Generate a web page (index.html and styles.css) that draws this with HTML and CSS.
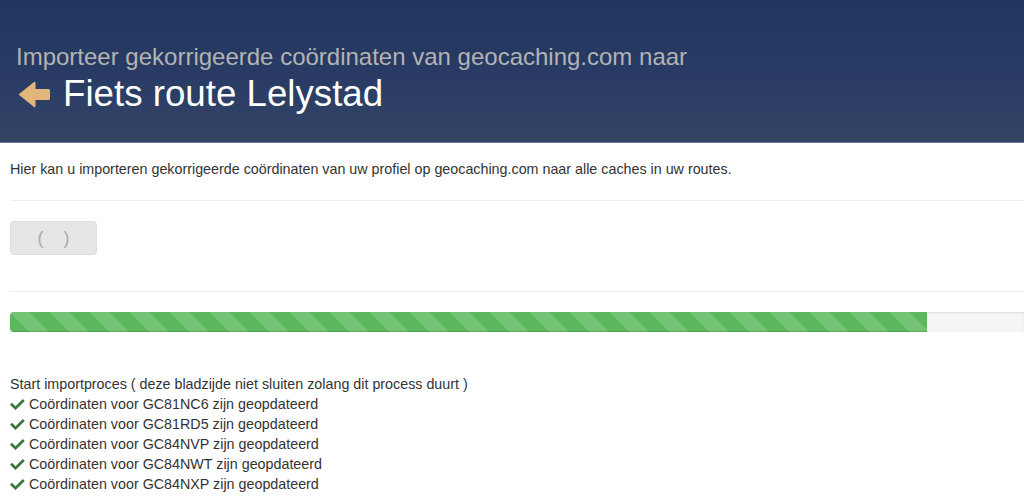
FILE: index.html
```html
<!DOCTYPE html>
<html lang="nl">
<head>
  <meta charset="UTF-8">
  <title>Importeer gekorrigeerde coördinaten</title>
  <link rel="stylesheet" href="styles.css">
</head>
<body>
  <div class="banner">
    <h2 class="banner-sub">Importeer gekorrigeerde coördinaten van geocaching.com naar</h2>
    <h1 class="banner-title">
      <svg class="back-icon" viewBox="0 0 32 27" width="32" height="27">
        <path d="M0.5 13.5 L16 1 Q17.5 0 17.5 2 L17.5 8 L30.5 8 Q32 8 32 9.5 L32 17.5 Q32 19 30.5 19 L17.5 19 L17.5 25 Q17.5 27 16 26 Z" fill="#e2b57a"/>
      </svg>
      Fiets route Lelystad
    </h1>
  </div>

  <div class="content">
    <p class="intro">Hier kan u importeren gekorrigeerde coördinaten van uw profiel op geocaching.com naar alle caches in uw routes.</p>
    <hr>
    <button class="btn" type="button">(&nbsp;&nbsp;&nbsp;&nbsp;)</button>
    <hr>
    <div class="progress">
      <div class="progress-bar" style="width: 90.4%"></div>
    </div>

    <div class="log">
      <div>Start importproces ( deze bladzijde niet sluiten zolang dit process duurt )</div>
      <div class="log-ok"><svg class="check" viewBox="0 0 15 11" width="15" height="11"><path d="M0 5.8 L2 3.8 L5.5 7.2 L12.8 0 L14.8 2 L5.5 11 Z" fill="#3c763d"/></svg>Coördinaten voor GC81NC6 zijn geopdateerd</div>
      <div class="log-ok"><svg class="check" viewBox="0 0 15 11" width="15" height="11"><path d="M0 5.8 L2 3.8 L5.5 7.2 L12.8 0 L14.8 2 L5.5 11 Z" fill="#3c763d"/></svg>Coördinaten voor GC81RD5 zijn geopdateerd</div>
      <div class="log-ok"><svg class="check" viewBox="0 0 15 11" width="15" height="11"><path d="M0 5.8 L2 3.8 L5.5 7.2 L12.8 0 L14.8 2 L5.5 11 Z" fill="#3c763d"/></svg>Coördinaten voor GC84NVP zijn geopdateerd</div>
      <div class="log-ok"><svg class="check" viewBox="0 0 15 11" width="15" height="11"><path d="M0 5.8 L2 3.8 L5.5 7.2 L12.8 0 L14.8 2 L5.5 11 Z" fill="#3c763d"/></svg>Coördinaten voor GC84NWT zijn geopdateerd</div>
      <div class="log-ok"><svg class="check" viewBox="0 0 15 11" width="15" height="11"><path d="M0 5.8 L2 3.8 L5.5 7.2 L12.8 0 L14.8 2 L5.5 11 Z" fill="#3c763d"/></svg>Coördinaten voor GC84NXP zijn geopdateerd</div>
    </div>
  </div>
</body>
</html>
```

FILE: styles.css
```css
body {
  margin: 0;
  padding: 0;
  font-family: "Liberation Sans", Arial, sans-serif;
  font-size: 14.3px;
  line-height: 20px;
  color: #333;
  background: #fff;
  overflow: hidden;
}

.banner {
  height: 143px;
  padding: 44px 16px 0;
  background: linear-gradient(to bottom, #22355f 0%, #283b65 50%, #344465 100%);
  border-bottom: 1px solid #6b7591;
  box-sizing: border-box;
}

.banner-sub {
  margin: 0;
  font-size: 24px;
  font-weight: normal;
  line-height: 26px;
  color: #b3b3b3;
}

.banner-title {
  margin: 4px 0 0;
  display: flex;
  align-items: center;
  gap: 13px;
  font-size: 36.7px;
  font-weight: normal;
  line-height: 40px;
  color: #fff;
}

.back-icon {
  margin-left: 2px;
}

.content {
  padding: 0 0 0 10px;
}

.intro {
  margin: 16px 0 0;
}

hr {
  margin: 21px 0 20px;
  border: 0;
  border-top: 1px solid #eee;
}

.btn {
  width: 87px;
  height: 34px;
  padding: 0;
  background: #e6e6e6;
  border: 1px solid #ddd;
  border-radius: 4px;
  color: #aaa;
  font-family: "Liberation Sans", Arial, sans-serif;
  font-size: 18px;
}

.content .btn + hr {
  margin-top: 36px;
}

.progress {
  height: 20px;
  margin-top: 20px;
  background: #f5f5f5;
  border-radius: 4px 0 0 4px;
  box-shadow: inset 0 1px 2px rgba(0, 0, 0, 0.1);
  overflow: hidden;
}

.progress-bar {
  height: 100%;
  background-color: #5cb85c;
  background-image: linear-gradient(45deg, rgba(255, 255, 255, .15) 25%, transparent 25%, transparent 50%, rgba(255, 255, 255, .15) 50%, rgba(255, 255, 255, .15) 75%, transparent 75%, transparent);
  background-size: 40px 40px;
  box-shadow: inset 0 -1px 0 rgba(0, 0, 0, .15);
}

.log {
  margin-top: 42px;
}

.check {
  margin-right: 4px;
  vertical-align: -1px;
}
```
